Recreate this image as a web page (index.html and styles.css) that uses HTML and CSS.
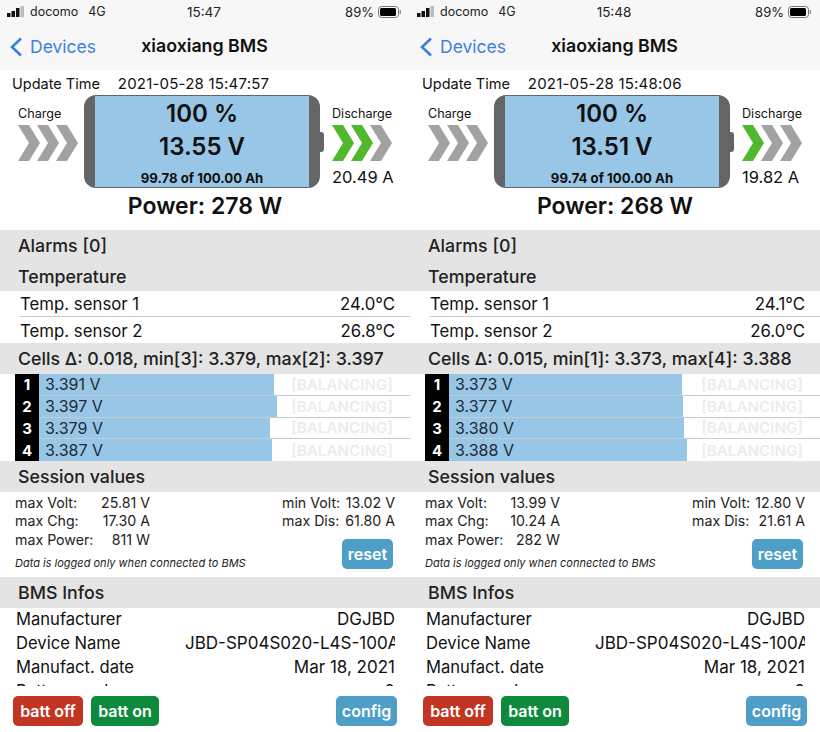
FILE: index.html
```html
<!DOCTYPE html>
<html lang="en">
<head>
    <meta charset="UTF-8">
    <meta name="viewport" content="width=device-width, initial-scale=1.0">
    <title>xiaoxiang BMS</title>
    <link rel="stylesheet" href="styles.css">
</head>
<body>
    <div class="container">
        <!-- first screenshot -->
        <div class="phone">
            <div class="top-bar">
                <div class="status-bar">
                    <div class="status-left">
                        <svg class="signal" width="18" height="11" viewBox="0 0 18 11"><rect x="0" y="7" width="3.5" height="4" fill="#111"/><rect x="4.5" y="5" width="3.5" height="6" fill="#111"/><rect x="9" y="2" width="3.5" height="9" fill="#111"/><rect x="13.5" y="0" width="3.5" height="11" fill="#bbb"/></svg>
                        <span class="carrier">docomo</span>
                        <span>4G</span>
                    </div>
                    <div class="status-time">15:47</div>
                    <div class="status-right">
                        <span>89%</span>
                        <svg width="23" height="12" viewBox="0 0 23 12"><rect x="0.5" y="0.5" width="20" height="11" rx="3" fill="none" stroke="#777"/><rect x="2" y="2" width="16" height="8" rx="1.5" fill="#000"/><rect x="21.5" y="4" width="1.5" height="4" fill="#999"/></svg>
                    </div>
                </div>
                <div class="nav-bar">
                    <div class="nav-back">
                        <svg width="14" height="20" viewBox="0 0 14 20"><path d="M12 1.5 L3 10 L12 18.5" fill="none" stroke="#3a7fe0" stroke-width="2.6"/></svg>
                        <span>Devices</span>
                    </div>
                    <div class="nav-title">xiaoxiang BMS</div>
                </div>
            </div>
            <div class="update-row"><span>Update Time</span><span class="update-time">2021-05-28 15:47:57</span></div>
            <div class="battery-row">
                <div class="flow flow-charge">
                    <div class="flow-label">Charge</div>
                    <svg width="60" height="36" viewBox="0 0 60 36"><polygon points="0,0 11,0 22,18 11,36 0,36 11,18" fill="#a2a2a2"/><polygon points="19,0 30,0 41,18 30,36 19,36 30,18" fill="#a2a2a2"/><polygon points="38,0 49,0 60,18 49,36 38,36 49,18" fill="#a2a2a2"/></svg>
                </div>
                <div class="battery">
                    <div class="battery-body">
                        <div class="battery-pct">100 %</div>
                        <div class="battery-volt">13.55 V</div>
                        <div class="battery-ah">99.78 of 100.00 Ah</div>
                    </div>
                </div>
                <div class="battery-nub"></div>
                <div class="flow flow-discharge">
                    <div class="flow-label">Discharge</div>
                    <svg width="60" height="36" viewBox="0 0 60 36"><polygon points="0,0 11,0 22,18 11,36 0,36 11,18" fill="#4fb82d"/><polygon points="19,0 30,0 41,18 30,36 19,36 30,18" fill="#4fb82d"/><polygon points="38,0 49,0 60,18 49,36 38,36 49,18" fill="#a2a2a2"/></svg>
                    <div class="flow-amps">20.49 A</div>
                </div>
            </div>
            <div class="power">Power: 278 W</div>
            <div class="section-head">Alarms [0]</div>
            <div class="section-head section-temp">Temperature</div>
            <div class="temp-row temp-first"><span>Temp. sensor 1</span><span>24.0°C</span></div>
            <div class="temp-row"><span>Temp. sensor 2</span><span>26.8°C</span></div>
            <div class="section-head">Cells Δ: 0.018, min[3]: 3.379, max[2]: 3.397</div>
            <div class="cells">
                <div class="cell"><div class="cell-num">1</div><div class="cell-track"><div class="cell-bar" style="width: 235px"></div><span class="cell-volt">3.391 V</span><span class="cell-flag">[BALANCING]</span></div></div>
                <div class="cell"><div class="cell-num">2</div><div class="cell-track"><div class="cell-bar" style="width: 238px"></div><span class="cell-volt">3.397 V</span><span class="cell-flag">[BALANCING]</span></div></div>
                <div class="cell"><div class="cell-num">3</div><div class="cell-track"><div class="cell-bar" style="width: 231px"></div><span class="cell-volt">3.379 V</span><span class="cell-flag">[BALANCING]</span></div></div>
                <div class="cell"><div class="cell-num">4</div><div class="cell-track"><div class="cell-bar" style="width: 233px"></div><span class="cell-volt">3.387 V</span><span class="cell-flag">[BALANCING]</span></div></div>
            </div>
            <div class="section-head">Session values</div>
            <div class="session">
                <div class="session-left">
                    <div class="stat"><span>max Volt:</span><span>25.81 V</span></div>
                    <div class="stat"><span>max Chg:</span><span>17.30 A</span></div>
                    <div class="stat"><span>max Power:</span><span>811 W</span></div>
                    <div class="session-note">Data is logged only when connected to BMS</div>
                </div>
                <div class="session-right">
                    <div class="stat"><span>min Volt:</span><span>13.02 V</span></div>
                    <div class="stat"><span>max Dis:</span><span>61.80 A</span></div>
                    <div class="btn btn-blue btn-reset">reset</div>
                </div>
            </div>
            <div class="section-head">BMS Infos</div>
            <div class="infos">
                <div class="info-row"><span>Manufacturer</span><span class="info-val">DGJBD</span></div>
                <div class="info-row"><span>Device Name</span><span class="info-val">JBD-SP04S020-L4S-100Ah</span></div>
                <div class="info-row"><span>Manufact. date</span><span class="info-val">Mar 18, 2021</span></div>
                <div class="info-row"><span>Battery cycles</span><span class="info-val">0</span></div>
            </div>
            <div class="footer">
                <div class="btn btn-red">batt off</div>
                <div class="btn btn-green">batt on</div>
                <div class="btn btn-blue btn-config">config</div>
            </div>
        </div>

        <!-- second screenshot -->
        <div class="phone">
            <div class="top-bar">
                <div class="status-bar">
                    <div class="status-left">
                        <svg class="signal" width="18" height="11" viewBox="0 0 18 11"><rect x="0" y="7" width="3.5" height="4" fill="#111"/><rect x="4.5" y="5" width="3.5" height="6" fill="#111"/><rect x="9" y="2" width="3.5" height="9" fill="#111"/><rect x="13.5" y="0" width="3.5" height="11" fill="#bbb"/></svg>
                        <span class="carrier">docomo</span>
                        <span>4G</span>
                    </div>
                    <div class="status-time">15:48</div>
                    <div class="status-right">
                        <span>89%</span>
                        <svg width="23" height="12" viewBox="0 0 23 12"><rect x="0.5" y="0.5" width="20" height="11" rx="3" fill="none" stroke="#777"/><rect x="2" y="2" width="16" height="8" rx="1.5" fill="#000"/><rect x="21.5" y="4" width="1.5" height="4" fill="#999"/></svg>
                    </div>
                </div>
                <div class="nav-bar">
                    <div class="nav-back">
                        <svg width="14" height="20" viewBox="0 0 14 20"><path d="M12 1.5 L3 10 L12 18.5" fill="none" stroke="#3a7fe0" stroke-width="2.6"/></svg>
                        <span>Devices</span>
                    </div>
                    <div class="nav-title">xiaoxiang BMS</div>
                </div>
            </div>
            <div class="update-row"><span>Update Time</span><span class="update-time">2021-05-28 15:48:06</span></div>
            <div class="battery-row">
                <div class="flow flow-charge">
                    <div class="flow-label">Charge</div>
                    <svg width="60" height="36" viewBox="0 0 60 36"><polygon points="0,0 11,0 22,18 11,36 0,36 11,18" fill="#a2a2a2"/><polygon points="19,0 30,0 41,18 30,36 19,36 30,18" fill="#a2a2a2"/><polygon points="38,0 49,0 60,18 49,36 38,36 49,18" fill="#a2a2a2"/></svg>
                </div>
                <div class="battery">
                    <div class="battery-body">
                        <div class="battery-pct">100 %</div>
                        <div class="battery-volt">13.51 V</div>
                        <div class="battery-ah">99.74 of 100.00 Ah</div>
                    </div>
                </div>
                <div class="battery-nub"></div>
                <div class="flow flow-discharge">
                    <div class="flow-label">Discharge</div>
                    <svg width="60" height="36" viewBox="0 0 60 36"><polygon points="0,0 11,0 22,18 11,36 0,36 11,18" fill="#4fb82d"/><polygon points="19,0 30,0 41,18 30,36 19,36 30,18" fill="#a2a2a2"/><polygon points="38,0 49,0 60,18 49,36 38,36 49,18" fill="#a2a2a2"/></svg>
                    <div class="flow-amps">19.82 A</div>
                </div>
            </div>
            <div class="power">Power: 268 W</div>
            <div class="section-head">Alarms [0]</div>
            <div class="section-head section-temp">Temperature</div>
            <div class="temp-row temp-first"><span>Temp. sensor 1</span><span>24.1°C</span></div>
            <div class="temp-row"><span>Temp. sensor 2</span><span>26.0°C</span></div>
            <div class="section-head">Cells Δ: 0.015, min[1]: 3.373, max[4]: 3.388</div>
            <div class="cells">
                <div class="cell"><div class="cell-num">1</div><div class="cell-track"><div class="cell-bar" style="width: 233px"></div><span class="cell-volt">3.373 V</span><span class="cell-flag">[BALANCING]</span></div></div>
                <div class="cell"><div class="cell-num">2</div><div class="cell-track"><div class="cell-bar" style="width: 234px"></div><span class="cell-volt">3.377 V</span><span class="cell-flag">[BALANCING]</span></div></div>
                <div class="cell"><div class="cell-num">3</div><div class="cell-track"><div class="cell-bar" style="width: 235px"></div><span class="cell-volt">3.380 V</span><span class="cell-flag">[BALANCING]</span></div></div>
                <div class="cell"><div class="cell-num">4</div><div class="cell-track"><div class="cell-bar" style="width: 238px"></div><span class="cell-volt">3.388 V</span><span class="cell-flag">[BALANCING]</span></div></div>
            </div>
            <div class="section-head">Session values</div>
            <div class="session">
                <div class="session-left">
                    <div class="stat"><span>max Volt:</span><span>13.99 V</span></div>
                    <div class="stat"><span>max Chg:</span><span>10.24 A</span></div>
                    <div class="stat"><span>max Power:</span><span>282 W</span></div>
                    <div class="session-note">Data is logged only when connected to BMS</div>
                </div>
                <div class="session-right">
                    <div class="stat"><span>min Volt:</span><span>12.80 V</span></div>
                    <div class="stat"><span>max Dis:</span><span>21.61 A</span></div>
                    <div class="btn btn-blue btn-reset">reset</div>
                </div>
            </div>
            <div class="section-head">BMS Infos</div>
            <div class="infos">
                <div class="info-row"><span>Manufacturer</span><span class="info-val">DGJBD</span></div>
                <div class="info-row"><span>Device Name</span><span class="info-val">JBD-SP04S020-L4S-100Ah</span></div>
                <div class="info-row"><span>Manufact. date</span><span class="info-val">Mar 18, 2021</span></div>
                <div class="info-row"><span>Battery cycles</span><span class="info-val">0</span></div>
            </div>
            <div class="footer">
                <div class="btn btn-red">batt off</div>
                <div class="btn btn-green">batt on</div>
                <div class="btn btn-blue btn-config">config</div>
            </div>
        </div>
    </div>
</body>
</html>
```

FILE: styles.css
```css
* {
    box-sizing: border-box;
    padding: 0;
    margin: 0;
}

body {
    background: #fff;
    color: #111;
    font-family: Inter, 'Liberation Sans', sans-serif;
    overflow: hidden;
}

.container {
    width: 820px;
    height: 732px;
    display: flex;
}

.phone {
    width: 410px;
    height: 732px;
    display: flex;
    flex-direction: column;
    overflow: hidden;
}

/* status and nav */
.top-bar {
    height: 70px;
    background: #f7f7f7;
    flex-shrink: 0;
}

.status-bar {
    height: 23px;
    padding: 0 9px 0 7px;
    display: grid;
    grid-template-columns: 1fr 1fr 1fr;
    align-items: center;
    font-size: 12.5px;
    color: #222;
}

.status-left {
    display: flex;
    align-items: center;
}

.signal {
    margin-right: 5px;
}

.carrier {
    margin-right: 10px;
}

.status-time {
    text-align: center;
    font-size: 13.5px;
}

.status-right {
    display: flex;
    justify-content: flex-end;
    align-items: center;
    gap: 4px;
    font-size: 13px;
}

.nav-bar {
    height: 47px;
    position: relative;
    display: flex;
    align-items: center;
    justify-content: center;
}

.nav-back {
    position: absolute;
    left: 9px;
    top: 13px;
    display: flex;
    align-items: center;
    gap: 7px;
    color: #3f80de;
    font-size: 17.5px;
}

.nav-title {
    font-size: 17.8px;
    font-weight: 600;
    color: #111;
    padding-bottom: 2px;
    padding-right: 1px;
}

/* update time */
.update-row {
    height: 25px;
    padding: 1px 0 0 12px;
    display: flex;
    align-items: center;
    gap: 18px;
    font-size: 14.5px;
}

.update-time {
    font-size: 15px;
    letter-spacing: 0.2px;
}

/* battery */
.battery-row {
    height: 95px;
    padding-left: 18px;
    display: flex;
    align-items: flex-start;
    flex-shrink: 0;
}

.flow {
    width: 60px;
    display: flex;
    flex-direction: column;
    align-items: flex-start;
}

.flow-label {
    font-size: 12.6px;
    height: 30px;
    padding-top: 11px;
    white-space: nowrap;
}

.flow-discharge {
    margin-left: 8px;
}

.flow-amps {
    font-size: 16.5px;
    margin-top: 6px;
    white-space: nowrap;
}

.battery {
    width: 236px;
    height: 93px;
    margin-left: 6px;
    padding: 1px 11px;
    background: #636566;
    border-radius: 12px;
}

.battery-body {
    height: 91px;
    background: #98c6e7;
    display: flex;
    flex-direction: column;
    align-items: center;
}

.battery-pct {
    font-size: 24px;
    font-weight: 600;
    margin-top: 3px;
    line-height: 30px;
}

.battery-volt {
    font-size: 24px;
    font-weight: 600;
    line-height: 32px;
    margin-top: 2px;
}

.battery-ah {
    font-size: 13.2px;
    font-weight: 700;
    margin-top: 7px;
    line-height: 16px;
}

.battery-nub {
    width: 4px;
    height: 20px;
    margin-top: 37px;
    background: #636566;
    border-radius: 0 3px 3px 0;
}

.power {
    height: 40px;
    padding-bottom: 8px;
    display: flex;
    justify-content: center;
    align-items: center;
    font-size: 23px;
    font-weight: 600;
    flex-shrink: 0;
}

/* sections */
.section-head {
    height: 31px;
    padding-left: 18px;
    display: flex;
    align-items: center;
    background: #e4e4e4;
    font-size: 17.8px;
    font-weight: 500;
    color: #222;
    flex-shrink: 0;
    white-space: nowrap;
}

.section-temp {
    height: 30px;
}

.temp-row {
    height: 26px;
    margin-left: 20px;
    padding: 1px 15px 0 0;
    display: flex;
    justify-content: space-between;
    align-items: center;
    font-size: 16.8px;
    flex-shrink: 0;
}

.temp-first {
    border-bottom: 1px solid #c9c9c9;
}

/* cells */
.cells {
    height: 87px;
    flex-shrink: 0;
}

.cell {
    height: 21.75px;
    display: flex;
    padding-left: 15px;
}

.cell-num {
    width: 24px;
    background: #000;
    color: #fff;
    font-size: 15px;
    font-weight: 700;
    display: flex;
    justify-content: center;
    align-items: center;
}

.cell-track {
    flex: 1;
    position: relative;
    display: flex;
    justify-content: space-between;
    align-items: center;
    padding: 0 17px 0 6px;
    border-bottom: 1px solid #c4ccd2;
    font-size: 16px;
}

.cell:last-child .cell-track {
    border-bottom: 0;
}

.cell-bar {
    position: absolute;
    left: 0;
    top: 0;
    bottom: 0;
    background: #98c6e7;
}

.cell-volt {
    position: relative;
    color: #1d2a35;
}

.cell-flag {
    position: relative;
    color: #ececec;
    font-size: 15.2px;
    font-weight: 600;
}

/* session */
.session {
    height: 85px;
    padding: 1px 15px 0;
    display: flex;
    justify-content: space-between;
    flex-shrink: 0;
    font-size: 14.2px;
    color: #222;
}

.session-left {
    width: 135px;
}

.session-right {
    width: 113px;
    display: flex;
    flex-direction: column;
}

.stat {
    height: 18.5px;
    display: flex;
    justify-content: space-between;
    align-items: center;
    white-space: nowrap;
}

.session-note {
    margin-top: 7px;
    font-size: 11px;
    font-style: italic;
    white-space: nowrap;
}

.btn {
    height: 30px;
    display: flex;
    justify-content: center;
    align-items: center;
    border-radius: 5px;
    color: #fff;
    font-size: 16px;
    font-weight: 600;
}

.btn-reset {
    width: 51px;
    margin-top: 9px;
    align-self: flex-end;
    margin-right: 2px;
}

.btn-blue {
    background: #4d9fc7;
}

.btn-red {
    width: 70px;
    background: #c23523;
}

.btn-green {
    width: 68px;
    background: #0e8a3c;
}

.btn-config {
    width: 61px;
    margin-left: auto;
}

/* bms infos */
.infos {
    flex: 1;
    min-height: 0;
    overflow: hidden;
    padding: 0 15px 0 16px;
    font-size: 16.6px;
}

.info-row {
    height: 24px;
    line-height: 23px;
    display: flex;
    justify-content: space-between;
    align-items: flex-start;
}

.info-val {
    max-width: 210px;
    overflow: hidden;
    white-space: nowrap;
    font-size: 17px;
}

/* bottom buttons */
.footer {
    height: 46px;
    padding: 10px 13px 0;
    display: flex;
    gap: 8px;
    flex-shrink: 0;
}
```
